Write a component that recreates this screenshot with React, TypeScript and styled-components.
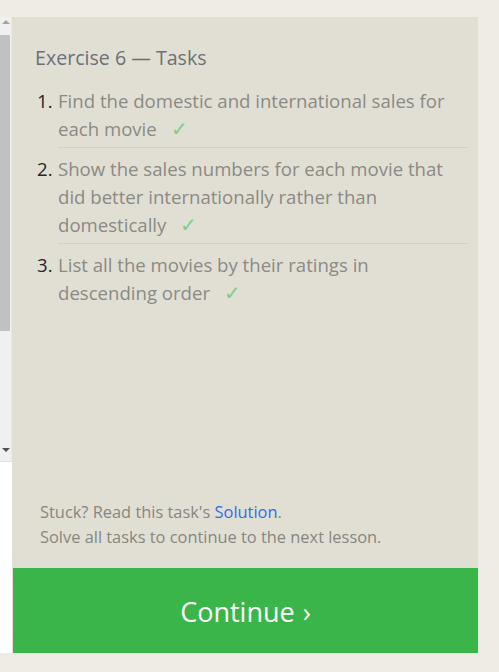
import React from "react";
import styled, { createGlobalStyle } from "styled-components";

const Global = createGlobalStyle`
  html, body { margin: 0; padding: 0; background: #efece4; }
  body { font-family: "Open Sans", "Noto Sans", sans-serif; }
`;

const Page = styled.div`
  display: flex;
  padding-top: 17px;
  height: 636px;
`;

const LeftPane = styled.div`
  width: 12px;
  display: flex;
  flex-direction: column;
  background: #ffffff;
`;

const ScrollTrack = styled.div`
  height: 444px;
  background: #f0f0f0;
  border-bottom: 1px solid #e2e2e2;
  display: flex;
  flex-direction: column;
  align-items: flex-start;
  width: 11px;
  border-right: 1px solid #e8e8e8;
`;

const Arrow = styled.div<{ $down?: boolean }>`
  width: 0;
  height: 0;
  margin: ${(p) => (p.$down ? "auto 0 9px 2px" : "3px 0 0 2px")};
  border-left: 4px solid transparent;
  border-right: 4px solid transparent;
  ${(p) =>
    p.$down
      ? "border-top: 4px solid #505050;"
      : "border-bottom: 4px solid #a3a3a3;"}
`;

const Thumb = styled.div`
  width: 10px;
  height: 296px;
  margin-top: 11px;
  background: #c1c1c1;
`;

const Panel = styled.div`
  width: 466px;
  background: #e1dfd4;
  display: flex;
  flex-direction: column;
`;

const Body = styled.div`
  flex: 1;
  padding: 28px 10px 0 23px;
  display: flex;
  flex-direction: column;
`;

const Title = styled.h2`
  margin: 0 0 16px 0;
  font-size: 19.6px;
  font-weight: 400;
  color: #6d6f78;
  line-height: 26px;
`;

const List = styled.ol`
  margin: 0;
  padding: 0;
  list-style: none;
`;

const Item = styled.li`
  display: flex;
  font-size: 18.6px;
  line-height: 28px;
  color: #8b8a84;
`;

const Num = styled.span`
  width: 21px;
  flex: none;
  color: #22252e;
  padding-left: 2px;
`;

const ItemText = styled.div<{ $last?: boolean }>`
  flex: 1;
  padding: 0 0 4px 0;
  margin-bottom: 7px;
  border-bottom: ${(p) => (p.$last ? "none" : "1px solid #d3d1c6")};
`;

const Check = styled.span`
  color: #7ccf89;
  margin-left: 14px;
  font-size: 20px;
  line-height: 20px;
`;

const Footer = styled.div`
  margin-top: auto;
  padding: 0 0 19px 5px;
  font-size: 16.4px;
  line-height: 25px;
  color: #878680;
`;

const Link = styled.a`
  color: #2f6de6;
  text-decoration: none;
`;

const ContinueButton = styled.button`
  height: 85px;
  margin-left: 1px;
  border: none;
  background: #3ab54a;
  color: #ffffff;
  font-family: "Open Sans", "Noto Sans", sans-serif;
  font-size: 27px;
  display: flex;
  align-items: center;
  justify-content: center;
  gap: 8px;
  padding: 2px 0 0 0;
`;

const tasks = [
  "Find the domestic and international sales for each movie",
  "Show the sales numbers for each movie that did better internationally rather than domestically",
  "List all the movies by their ratings in descending order",
];

export default function App() {
  return (
    <>
      <Global />
      <Page>
        <LeftPane>
          <ScrollTrack>
            <Arrow />
            <Thumb />
            <Arrow $down />
          </ScrollTrack>
        </LeftPane>
        <Panel>
          <Body>
            <Title>Exercise 6 — Tasks</Title>
            <List>
              {tasks.map((t, i) => (
                <Item key={i}>
                  <Num>{i + 1}.</Num>
                  <ItemText $last={i === tasks.length - 1}>
                    {t}
                    <Check>✓</Check>
                  </ItemText>
                </Item>
              ))}
            </List>
            <Footer>
              Stuck? Read this task's <Link href="#">Solution</Link>.
              <br />
              Solve all tasks to continue to the next lesson.
            </Footer>
          </Body>
          <ContinueButton>
            Continue <span>›</span>
          </ContinueButton>
        </Panel>
      </Page>
    </>
  );
}
